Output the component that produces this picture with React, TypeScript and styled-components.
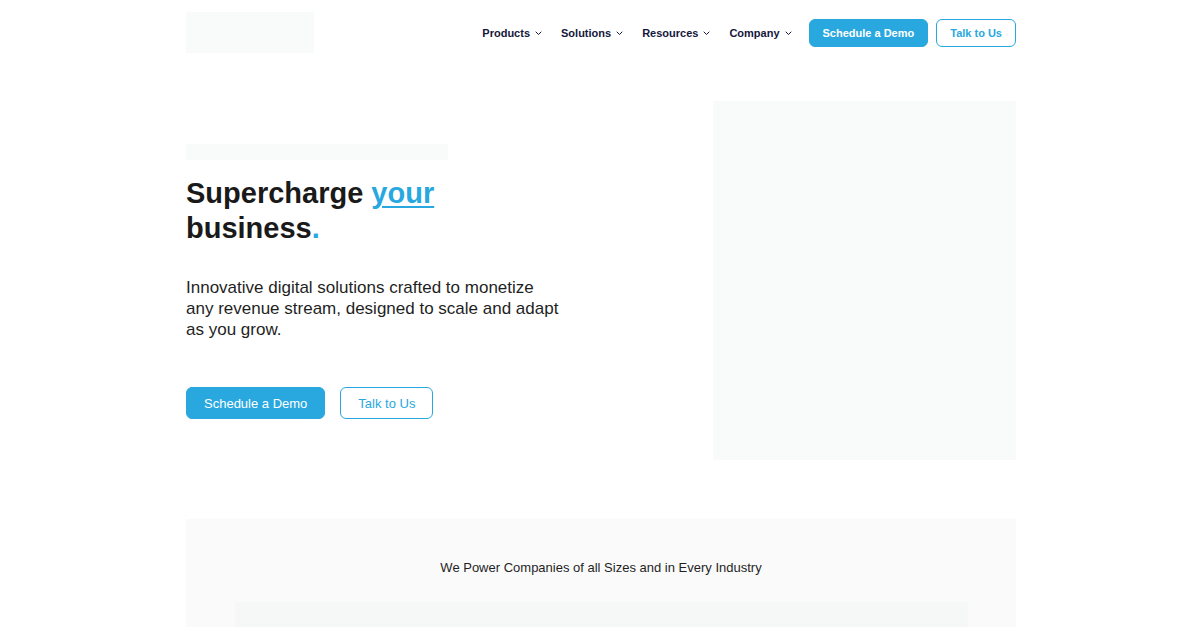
import React from 'react';
import styled, { createGlobalStyle } from 'styled-components';

const GlobalStyle = createGlobalStyle`
	* { box-sizing: border-box; }
	body {
		margin: 0;
		background: #ffffff;
		font-family: 'Liberation Sans', Arial, sans-serif;
		color: #1a1a1a;
	}
`;

const BLUE = '#29a8df';
const NAVY = '#14173b';
const GHOST = '#f9fafa';

const navItems = ['Products', 'Solutions', 'Resources', 'Company'];

const Chevron = () => (
	<svg width="7" height="5" viewBox="0 0 7 5" fill="none">
		<path d="M1 1l2.5 2.5L6 1" stroke={NAVY} strokeWidth="1" strokeLinecap="round" strokeLinejoin="round" />
	</svg>
);

const App = () => {
	return (
		<>
			<GlobalStyle />
			<Page>
				<Header>
					<LogoSlot />
					<Nav>
						{navItems.map((item) => (
							<NavItem key={item}>
								{item}
								<Chevron />
							</NavItem>
						))}
						<NavActions>
							<Button $variant="solid" $size="sm">Schedule a Demo</Button>
							<Button $variant="outline" $size="sm">Talk to Us</Button>
						</NavActions>
					</Nav>
				</Header>

				<Hero>
					<HeroText>
						<EyebrowSlot />
						<Title>
							Supercharge <Accent>your</Accent>
							<br />
							business<Dot>.</Dot>
						</Title>
						<Lead>
							Innovative digital solutions crafted to monetize any revenue stream, designed to scale and adapt as you grow.
						</Lead>
						<HeroActions>
							<Button $variant="solid" $size="lg">Schedule a Demo</Button>
							<Button $variant="outline" $size="lg">Talk to Us</Button>
						</HeroActions>
					</HeroText>
					<HeroMedia />
				</Hero>

				<Clients>
					<ClientsTitle>We Power Companies of all Sizes and in Every Industry</ClientsTitle>
					<LogoStrip />
				</Clients>
			</Page>
		</>
	);
};

export default App;

const Page = styled.div`
	width: 830px;
	margin: 0 auto;
	height: 627px;
	overflow: hidden;
`;

const Header = styled.header`
	display: flex;
	align-items: center;
	justify-content: space-between;
	height: 65px;
`;

const LogoSlot = styled.div`
	width: 128px;
	height: 41px;
	background: ${GHOST};
`;

const Nav = styled.nav`
	display: flex;
	align-items: center;
`;

const NavItem = styled.div`
	display: flex;
	align-items: center;
	gap: 5px;
	margin-right: 19px;
	font-size: 11px;
	font-weight: 700;
	color: ${NAVY};
	cursor: pointer;

	svg {
		margin-top: 1px;
	}
`;

const NavActions = styled.div`
	display: flex;
	gap: 8px;
	margin-left: -2px;
`;

const Button = styled.button<{ $variant: 'solid' | 'outline'; $size: 'sm' | 'lg' }>`
	font-family: 'Liberation Sans', Arial, sans-serif;
	border-radius: 6px;
	border: 1.5px solid ${BLUE};
	cursor: pointer;
	background: ${({ $variant }) => ($variant === 'solid' ? BLUE : '#ffffff')};
	color: ${({ $variant }) => ($variant === 'solid' ? '#ffffff' : BLUE)};
	font-weight: ${({ $size }) => ($size === 'sm' ? 700 : 400)};
	font-size: ${({ $size }) => ($size === 'sm' ? '11px' : '13px')};
	height: ${({ $size }) => ($size === 'sm' ? '28px' : '32px')};
	padding: ${({ $size }) => ($size === 'sm' ? '0 13px' : '0 17px')};
`;

const Hero = styled.section`
	display: flex;
	align-items: center;
	justify-content: space-between;
	margin-top: 36px;
	height: 359px;
`;

const HeroText = styled.div`
	display: flex;
	flex-direction: column;
	align-items: flex-start;
	width: 378px;
	padding-top: 2px;
`;

const EyebrowSlot = styled.div`
	width: 262px;
	height: 16px;
	background: ${GHOST};
	margin-bottom: 16px;
`;

const Title = styled.h1`
	margin: 0;
	font-size: 29px;
	line-height: 35px;
	font-weight: 700;
	color: #1a1a1a;
`;

const Accent = styled.span`
	color: ${BLUE};
	text-decoration: underline;
	text-decoration-thickness: 2px;
	text-underline-offset: 3px;
`;

const Dot = styled.span`
	color: ${BLUE};
`;

const Lead = styled.p`
	margin: 31px 0 0;
	font-size: 17px;
	line-height: 21px;
	color: #1f1f1f;
`;

const HeroActions = styled.div`
	display: flex;
	gap: 15px;
	margin-top: 47px;
`;

const HeroMedia = styled.div`
	width: 303px;
	height: 359px;
	background: ${GHOST};
`;

const Clients = styled.section`
	margin-top: 59px;
	background: #fafafa;
	padding: 40px 48px 0;
	display: flex;
	flex-direction: column;
	align-items: center;
`;

const ClientsTitle = styled.h2`
	margin: 0;
	font-size: 13px;
	line-height: 18px;
	font-weight: 400;
	color: #1f1f1f;
`;

const LogoStrip = styled.div`
	margin-top: 25px;
	width: 733px;
	height: 80px;
	background: #f6f7f7;
`;
